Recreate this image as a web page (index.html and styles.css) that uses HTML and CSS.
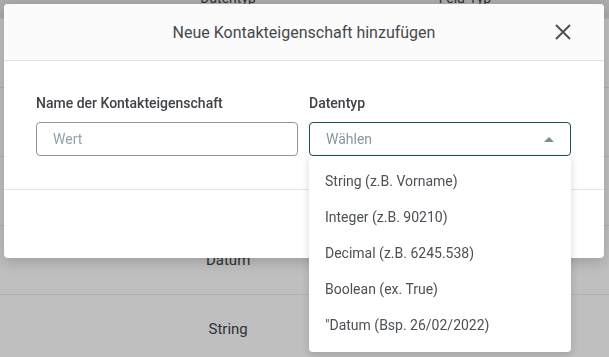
FILE: index.html
```html
<!DOCTYPE html>
<html lang="de">
    <head>
        <meta charset="UTF-8">
        <meta name="viewport" content="width=device-width, initial-scale=1.0">
        <title>Kontakteigenschaften</title>
        <link rel="stylesheet" href="styles.css">
    </head>

    <body>

        <div class="props-table">
            <div class="props-row props-head">
                <span class="cell cell-name"></span>
                <span class="cell cell-type">Datentyp</span>
                <span class="cell cell-field">Feld-Typ</span>
            </div>
            <div class="props-row">
                <span class="cell cell-name"></span>
                <span class="cell cell-type">String</span>
                <span class="cell cell-field"></span>
            </div>
            <div class="props-row">
                <span class="cell cell-name"></span>
                <span class="cell cell-type">String</span>
                <span class="cell cell-field"></span>
            </div>
            <div class="props-row">
                <span class="cell cell-name"></span>
                <span class="cell cell-type">Integer</span>
                <span class="cell cell-field"></span>
            </div>
            <div class="props-row">
                <span class="cell cell-name"></span>
                <span class="cell cell-type">Datum</span>
                <span class="cell cell-field"></span>
            </div>
            <div class="props-row">
                <span class="cell cell-name"></span>
                <span class="cell cell-type">String</span>
                <span class="cell cell-field"></span>
            </div>
        </div>

        <div class="backdrop"></div>

        <div class="modal">
            <div class="modal-header">
                <h2 class="modal-title">Neue Kontakteigenschaft hinzufügen</h2>
                <span class="close">
                    <svg width="16" height="16" viewBox="0 0 16 16">
                        <path d="M1 1 L15 15 M15 1 L1 15" stroke="#48535a" stroke-width="2" fill="none"/>
                    </svg>
                </span>
            </div>

            <div class="modal-body">
                <div class="field">
                    <label class="field-label">Name der Kontakteigenschaft</label>
                    <input type="text" class="field-input" placeholder="Wert">
                </div>

                <div class="field">
                    <label class="field-label">Datentyp</label>
                    <div class="select open">
                        <span class="select-value">Wählen</span>
                        <span class="select-arrow"></span>
                    </div>
                    <ul class="select-menu">
                        <li>String (z.B. Vorname)</li>
                        <li>Integer (z.B. 90210)</li>
                        <li>Decimal (z.B. 6245.538)</li>
                        <li>Boolean (ex. True)</li>
                        <li>"Datum (Bsp. 26/02/2022)</li>
                    </ul>
                </div>
            </div>

            <div class="modal-footer"></div>
        </div>

    </body>
</html>
```

FILE: styles.css
```css
body {
    margin: 0;
    font-family: Roboto, "Liberation Sans", sans-serif;
    background-color: #fff;
    overflow: hidden;
}

.props-table {
    margin-top: -22px;
}

.props-row {
    display: flex;
    align-items: center;
    height: 68px;
    border-bottom: 1px solid #e8ebf0;
    font-size: 15px;
    color: #404448;
}

.props-head {
    height: 40px;
    background-color: #e4e4e4;
    font-size: 14px;
}

.cell-name {
    width: 140px;
}

.cell-type {
    width: 192px;
    text-align: center;
}

.cell-field {
    width: 298px;
    text-align: center;
}

.backdrop {
    position: fixed;
    top: 0; left: 0; width: 100%; height: 100%;
    background-color: rgba(0,0,0,0.25);
}

.modal {
    position: fixed;
    top: 4px;
    left: 4px;
    width: 600px;
    height: 254px;
    background-color: #fff;
    border-radius: 4px;
    box-shadow: 0 4px 14px rgba(0,0,0,0.18);
    display: flex;
    flex-direction: column;
}

.modal-header {
    position: relative;
    height: 56px;
    display: flex;
    align-items: center;
    justify-content: center;
    background-color: #fbfbfb;
    border-bottom: 1px solid #e6e6e6;
    border-radius: 4px 4px 0 0;
}

.modal-title {
    margin: 0;
    font-size: 16px;
    font-weight: 400;
    color: #45494d;
}

.close {
    position: absolute;
    top: 20px;
    right: 33px;
    width: 16px;
    height: 16px;
    cursor: pointer;
}

.close svg {
    display: block;
}

.modal-body {
    display: flex;
    gap: 11px;
    padding: 32px 32px 33px 32px;
    border-bottom: 1px solid #e6e6e6;
}

.field {
    position: relative;
    width: 262px;
    display: flex;
    flex-direction: column;
    gap: 9px;
}

.field-label {
    font-size: 14px;
    font-weight: 500;
    line-height: 20px;
    color: #3f4347;
}

.field-input,
.select {
    box-sizing: border-box;
    height: 34px;
    width: 100%;
    padding: 0 16px;
    border: 1px solid #8b989f;
    border-radius: 4px;
    font-family: inherit;
    font-size: 14px;
    color: #333;
    outline: none;
}

.field-input::placeholder {
    color: #93a2aa;
}

.select {
    display: flex;
    align-items: center;
    justify-content: space-between;
    border-color: #1e4f56;
}

.select-value {
    color: #8a979e;
}

.select-arrow {
    width: 0;
    height: 0;
    border-left: 5px solid transparent;
    border-right: 5px solid transparent;
    border-bottom: 5px solid #7d8b92;
}

.select-menu {
    position: absolute;
    top: 63px;
    left: 0;
    width: 100%;
    margin: 0;
    padding: 7px 0 9px 0;
    list-style: none;
    background-color: #fff;
    border-radius: 0 0 4px 4px;
    box-shadow: 0 3px 8px rgba(0,0,0,0.16);
}

.select-menu li {
    height: 36px;
    line-height: 36px;
    padding: 0 16px;
    font-size: 14px;
    color: #4c5156;
}

.modal-footer {
    flex: 1;
}
```
